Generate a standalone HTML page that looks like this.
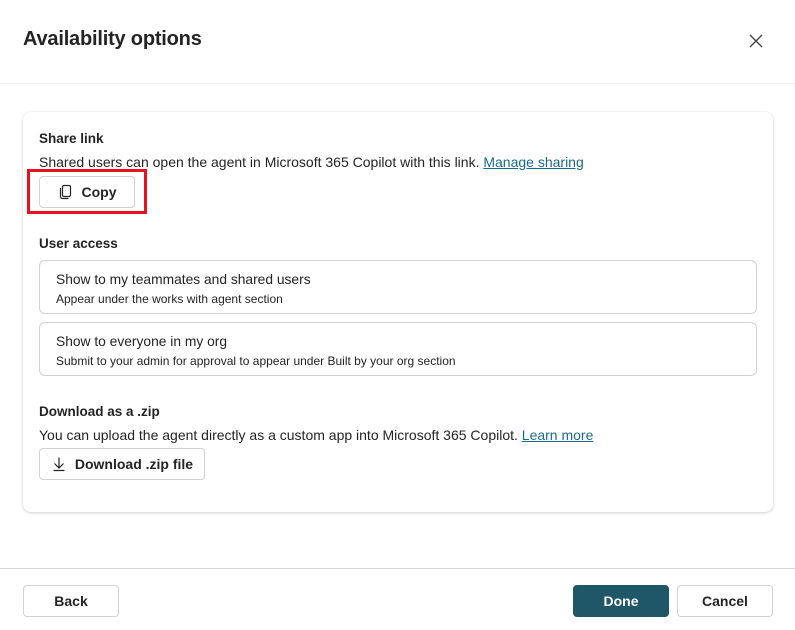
<!DOCTYPE html>
<html><head><meta charset="utf-8"><style>
*{box-sizing:border-box;margin:0;padding:0}
body{width:795px;height:630px;background:#fff;font-family:"Liberation Sans",sans-serif;color:#242424;position:relative;overflow:hidden}
.abs{position:absolute}
.title{left:23px;top:28px;font-size:20px;font-weight:bold;letter-spacing:-0.2px}
.hr1{left:0;top:83px;width:795px;height:1px;background:#f0f0f0}
.hr2{left:0;top:568px;width:795px;height:1px;background:#d6d6d6}
.card{left:23px;top:112px;width:750px;height:400px;border-radius:8px;box-shadow:0 1px 3px rgba(0,0,0,.18),0 0 1px rgba(0,0,0,.1);background:#fff}
.h{font-size:13.5px;font-weight:bold;left:39px}
.t{font-size:14px;left:39px;white-space:nowrap}
a{color:#1a6b8a;text-decoration:underline}
.btn{border:1px solid #d1d1d1;border-radius:4px;background:#fff;font-size:14px;font-weight:bold;display:flex;align-items:center;justify-content:center}
.opt{left:39px;width:718px;border:1px solid #d1d1d1;border-radius:6px}
.opt .a{position:absolute;left:16px;top:11px;font-size:13.8px}
.opt .b{position:absolute;left:16px;top:31px;font-size:12px}
</style></head><body>
<div class="abs title">Availability options</div>
<svg class="abs" style="left:749px;top:34px" width="14" height="14" viewBox="0 0 14 14"><path d="M1 1L13 13M13 1L1 13" stroke="#424242" stroke-width="1.4"/></svg>
<div class="abs hr1"></div>
<div class="abs card"></div>
<div class="abs h" style="top:131px">Share link</div>
<div class="abs t" style="top:154px">Shared users can open the agent in Microsoft 365 Copilot with this link. <a>Manage sharing</a></div>
<div class="abs" style="left:27px;top:169px;width:120px;height:45px;border:3px solid #e81123"></div>
<div class="abs btn" style="left:39px;top:176px;width:96px;height:32px"><svg width="16" height="16" viewBox="0 0 16 16" style="margin-right:8px"><rect x="4.5" y="1.5" width="8" height="11" rx="1.5" fill="none" stroke="#242424" stroke-width="1.2"/><path d="M2.5 4v8.5a2 2 0 0 0 2 2h6" fill="none" stroke="#242424" stroke-width="1.2"/></svg>Copy</div>
<div class="abs h" style="top:236px">User access</div>
<div class="abs opt" style="top:260px;height:54px"><div class="a">Show to my teammates and shared users</div><div class="b">Appear under the works with agent section</div></div>
<div class="abs opt" style="top:322px;height:54px"><div class="a">Show to everyone in my org</div><div class="b">Submit to your admin for approval to appear under Built by your org section</div></div>
<div class="abs h" style="top:404px">Download as a .zip</div>
<div class="abs t" style="top:427px">You can upload the agent directly as a custom app into Microsoft 365 Copilot. <a>Learn more</a></div>
<div class="abs btn" style="left:39px;top:448px;width:166px;height:32px"><svg width="16" height="16" viewBox="0 0 16 16" style="margin-right:8px"><path d="M8 1.5v10M3.5 7.5L8 12l4.5-4.5M2.5 14.5h11" fill="none" stroke="#242424" stroke-width="1.2"/></svg>Download .zip file</div>
<div class="abs hr2"></div>
<div class="abs btn" style="left:23px;top:585px;width:96px;height:32px">Back</div>
<div class="abs btn" style="left:573px;top:585px;width:96px;height:32px;background:#1f5668;border-color:#1f5668;color:#fff">Done</div>
<div class="abs btn" style="left:677px;top:585px;width:96px;height:32px">Cancel</div>
</body></html>
